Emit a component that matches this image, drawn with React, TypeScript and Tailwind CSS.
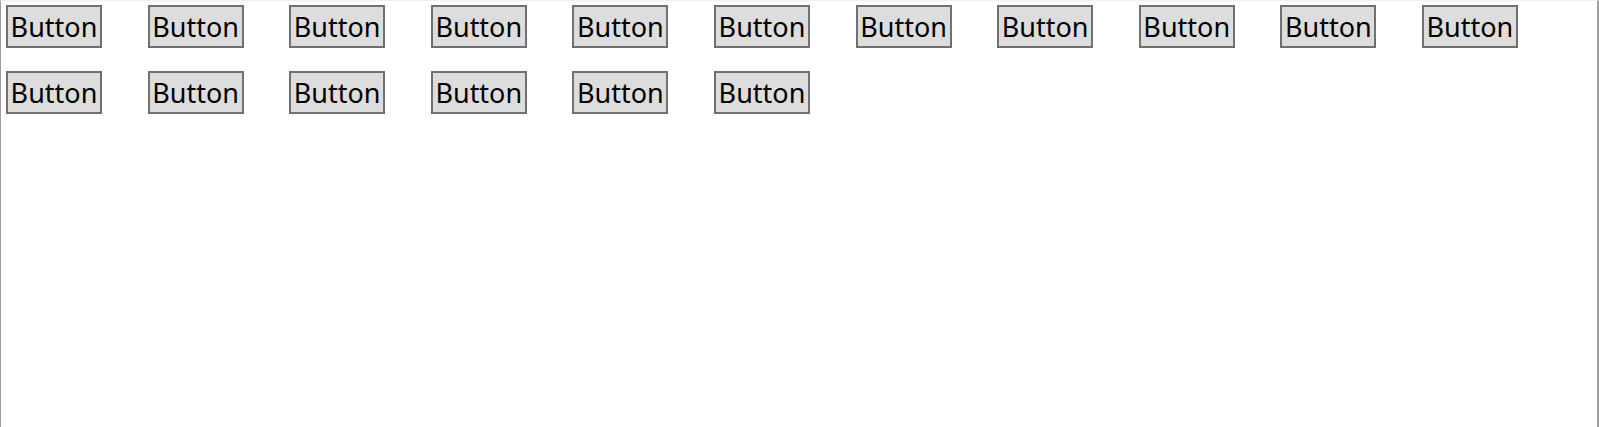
const COUNT = 17;

export default function App() {
  return (
    <div className="h-[427px] w-[1599px] overflow-hidden border-t border-t-[#f0f0f0] border-l border-l-[#a0a0a0] border-r-2 border-r-[#a0a0a0] bg-white">
      <div className="flex flex-wrap gap-x-[45.6px] gap-y-[23px] pl-[5px] pt-[4px] pr-[60px]">
        {Array.from({ length: COUNT }).map((_, i) => (
          <button
            key={i}
            className="flex h-[43px] w-[96px] items-center justify-center border-2 border-[#707070] bg-[#dddddd] px-0 pb-[1px] text-[27px] leading-none text-black font-['Noto_Sans','Open_Sans',sans-serif]"
          >
            Button
          </button>
        ))}
      </div>
    </div>
  );
}
